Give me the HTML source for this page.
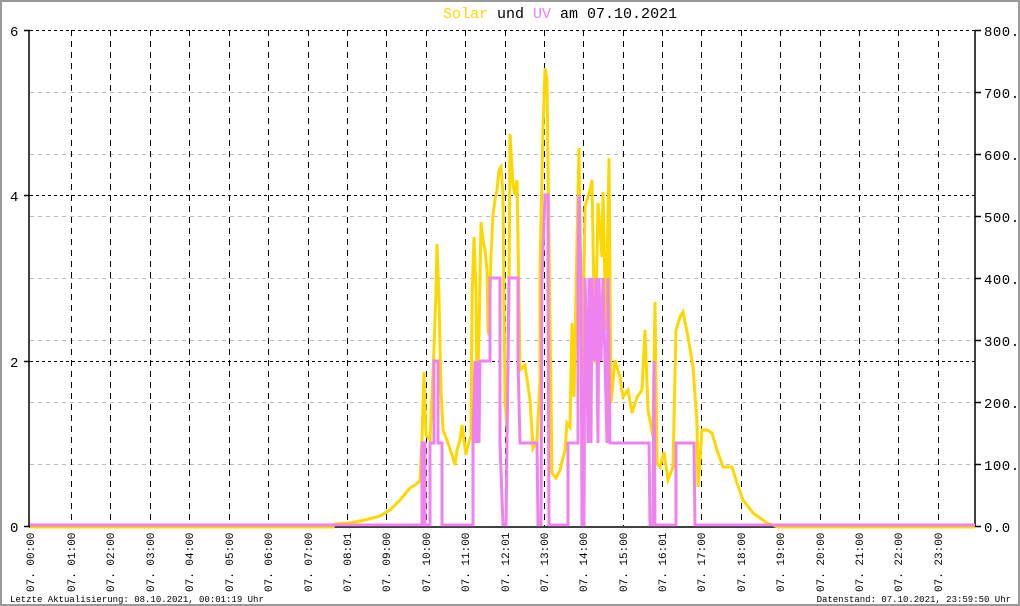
<!DOCTYPE html>
<html><head><meta charset="utf-8"><style>
html,body{margin:0;padding:0;background:#fff}
svg{display:block}
text{font-family:"Liberation Mono","DejaVu Sans Mono",monospace}
</style></head><body>
<svg width="1020" height="606" viewBox="0 0 1020 606" xmlns="http://www.w3.org/2000/svg">
<rect x="1" y="1" width="1018" height="604" fill="#fff" stroke="#999" stroke-width="2"/>
<text x="443" y="18" font-size="15"><tspan fill="#ffd700">Solar</tspan><tspan fill="#000"> und </tspan><tspan fill="#ee82ee">UV</tspan><tspan fill="#000"> am 07.10.2021</tspan></text>
<!-- gray right-axis grid -->
<g stroke="#bbb" stroke-width="1" stroke-dasharray="4,4">
<line x1="30" y1="464.5" x2="975" y2="464.5"/>
<line x1="30" y1="402.5" x2="975" y2="402.5"/>
<line x1="30" y1="340.5" x2="975" y2="340.5"/>
<line x1="30" y1="278.5" x2="975" y2="278.5"/>
<line x1="30" y1="216.5" x2="975" y2="216.5"/>
<line x1="30" y1="154.5" x2="975" y2="154.5"/>
<line x1="30" y1="92.5" x2="975" y2="92.5"/>
</g>
<g stroke="#000" stroke-width="1" stroke-dasharray="3,3">
<line x1="30" y1="30.5" x2="975" y2="30.5"/>
<line x1="30" y1="195.5" x2="975" y2="195.5"/>
<line x1="30" y1="361.5" x2="975" y2="361.5"/>
</g>
<g stroke="#000" stroke-width="1" stroke-dasharray="6,5">
<line x1="71.5" y1="30" x2="71.5" y2="526"/><line x1="110.5" y1="30" x2="110.5" y2="526"/><line x1="150.5" y1="30" x2="150.5" y2="526"/><line x1="189.5" y1="30" x2="189.5" y2="526"/><line x1="229.5" y1="30" x2="229.5" y2="526"/><line x1="268.5" y1="30" x2="268.5" y2="526"/><line x1="308.5" y1="30" x2="308.5" y2="526"/><line x1="347.5" y1="30" x2="347.5" y2="526"/><line x1="386.5" y1="30" x2="386.5" y2="526"/><line x1="426.5" y1="30" x2="426.5" y2="526"/><line x1="465.5" y1="30" x2="465.5" y2="526"/><line x1="505.5" y1="30" x2="505.5" y2="526"/><line x1="544.5" y1="30" x2="544.5" y2="526"/><line x1="583.5" y1="30" x2="583.5" y2="526"/><line x1="623.5" y1="30" x2="623.5" y2="526"/><line x1="662.5" y1="30" x2="662.5" y2="526"/><line x1="701.5" y1="30" x2="701.5" y2="526"/><line x1="741.5" y1="30" x2="741.5" y2="526"/><line x1="780.5" y1="30" x2="780.5" y2="526"/><line x1="820.5" y1="30" x2="820.5" y2="526"/><line x1="859.5" y1="30" x2="859.5" y2="526"/><line x1="898.5" y1="30" x2="898.5" y2="526"/><line x1="938.5" y1="30" x2="938.5" y2="526"/>
</g>
<!-- axes -->
<g stroke="#000" stroke-width="1.5">
<line x1="29" y1="30" x2="29" y2="527"/>
<line x1="975" y1="30" x2="975" y2="527"/>
<line x1="29" y1="527" x2="975" y2="527"/>
<line x1="24" y1="30.5" x2="30" y2="30.5"/><line x1="24" y1="195.5" x2="30" y2="195.5"/><line x1="24" y1="361.5" x2="30" y2="361.5"/><line x1="24" y1="526.5" x2="30" y2="526.5"/>
<line x1="975" y1="30.5" x2="981" y2="30.5"/><line x1="975" y1="92.5" x2="981" y2="92.5"/><line x1="975" y1="154.5" x2="981" y2="154.5"/><line x1="975" y1="216.5" x2="981" y2="216.5"/><line x1="975" y1="278.5" x2="981" y2="278.5"/><line x1="975" y1="340.5" x2="981" y2="340.5"/><line x1="975" y1="402.5" x2="981" y2="402.5"/><line x1="975" y1="464.5" x2="981" y2="464.5"/><line x1="975" y1="526.5" x2="981" y2="526.5"/>
</g>
<g font-size="14" fill="#000">
<text x="10" y="36">6</text><text x="10" y="201">4</text><text x="10" y="367">2</text><text x="10" y="532">0</text>
</g>
<g font-size="14" fill="#000" letter-spacing="0.5">
<text x="984" y="36">800.0</text><text x="984" y="98">700.0</text><text x="984" y="160">600.0</text><text x="984" y="222">500.0</text><text x="984" y="284">400.0</text><text x="984" y="346">300.0</text><text x="984" y="408">200.0</text><text x="984" y="470">100.0</text><text x="984" y="532">0.0</text>
</g>
<!-- solar -->
<polyline fill="none" stroke="#ffd700" stroke-width="3" stroke-linejoin="miter" points="30,527 333,527 335,524 350,523 365,520 380,516 390,510 400,500 410,488 415,485 420,481 422,440 424,372 426,435 430,440 432,395 434,350 436,290 437,244 439,300 441,390 443,430 447,440 452,455 455,465 457,450 460,440 462,425 464,440 466,455 468,445 471,436 472,300 474,237 476,290 477,400 479,335 481,222 483,240 485,250 487,270 488,330 489,335 491,255 493,215 495,200 497,190 499,170 501,167 503,195 505,400 507,430 509,300 510,134 513,185 515,195 517,180 519,300 520,370 525,365 530,400 533,448 537,440 540,380 540,270 543,130 545,68 547,80 549,243 552,473 556,478 560,470 565,450 567,423 570,427 572,323 574,397 577,240 579,148 582,410 585,207 590,190 592,180 595,363 598,203 602,257 603,192 606,330 609,158 611,403 615,360 620,377 623,397 628,390 632,413 637,397 642,390 645,330 648,410 653,437 655,302 657,463 660,467 664,452 668,480 673,467 676,330 680,317 683,312 688,337 693,367 697,423 698,487 702,430 707,430 712,433 717,450 723,467 732,467 737,483 743,500 753,513 767,523 773,525 778,527 975,527"/>
<!-- uv -->
<polyline fill="none" stroke="#ee82ee" stroke-width="3" points="30,525 422,525 422,443 425,443 425,525 430,525 430,443 434,443 434,361 438,361 438,443 442,443 442,525 473,525 473,443 475,361 476,443 478,361 479,443 480,361 490,361 490,278 500,278 500,443 503,525 506,525 507,443 509,278 518,278 518,361 520,443 537,443 538,525 541,525 542,278 545,195 548,195 548,278 549,525 568,525 568,443 578,443 578,278 579,195 581,278 582,525 584,525 585,278 587,361 588,443 589,278 590,361 591,443 592,278 594,361 596,278 597,361 598,443 599,278 601,361 603,278 605,361 607,443 608,278 610,443 649,443 650,525 653,525 654,361 655,525 676,525 676,443 694,443 695,525 975,525"/>
<!-- x labels -->
<g font-size="11" fill="#000">
<text transform="translate(34,592) rotate(-90)">07. 00:00</text>
<text transform="translate(75,592) rotate(-90)">07. 01:00</text>
<text transform="translate(114,592) rotate(-90)">07. 02:00</text>
<text transform="translate(154,592) rotate(-90)">07. 03:00</text>
<text transform="translate(193,592) rotate(-90)">07. 04:00</text>
<text transform="translate(233,592) rotate(-90)">07. 05:00</text>
<text transform="translate(272,592) rotate(-90)">07. 06:00</text>
<text transform="translate(312,592) rotate(-90)">07. 07:00</text>
<text transform="translate(351,592) rotate(-90)">07. 08:01</text>
<text transform="translate(390,592) rotate(-90)">07. 09:00</text>
<text transform="translate(430,592) rotate(-90)">07. 10:00</text>
<text transform="translate(469,592) rotate(-90)">07. 11:00</text>
<text transform="translate(509,592) rotate(-90)">07. 12:01</text>
<text transform="translate(548,592) rotate(-90)">07. 13:00</text>
<text transform="translate(587,592) rotate(-90)">07. 14:00</text>
<text transform="translate(627,592) rotate(-90)">07. 15:00</text>
<text transform="translate(666,592) rotate(-90)">07. 16:01</text>
<text transform="translate(705,592) rotate(-90)">07. 17:00</text>
<text transform="translate(745,592) rotate(-90)">07. 18:00</text>
<text transform="translate(784,592) rotate(-90)">07. 19:00</text>
<text transform="translate(824,592) rotate(-90)">07. 20:00</text>
<text transform="translate(863,592) rotate(-90)">07. 21:00</text>
<text transform="translate(902,592) rotate(-90)">07. 22:00</text>
<text transform="translate(942,592) rotate(-90)">07. 23:00</text>
</g>
<g font-size="9" fill="#000">
<text x="10" y="602">Letzte Aktualisierung: 08.10.2021, 00:01:19 Uhr</text>
<text x="1011" y="602" text-anchor="end">Datenstand: 07.10.2021, 23:59:50 Uhr</text>
</g>
</svg>
</body></html>
